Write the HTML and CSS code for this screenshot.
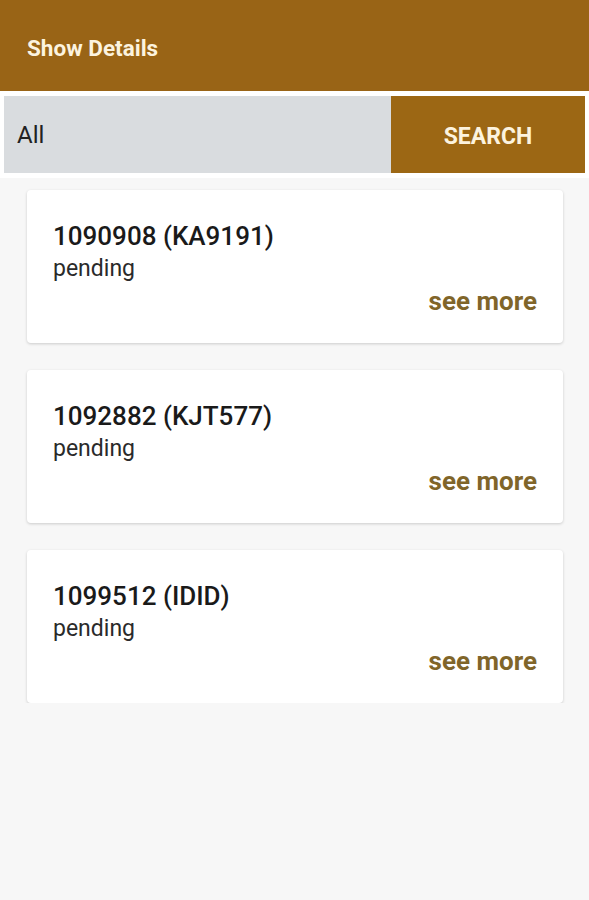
FILE: index.html
```html
<!DOCTYPE html>
<html lang="en">

<head>
    <meta charset="UTF-8">
    <meta name="viewport" content="width=device-width, initial-scale=1.0">
    <title>Show Details</title>
    <link rel="stylesheet" href="styles.css">
</head>

<body>
    <!-- Header -->
    <header class="app-bar">
        <h1 class="app-title">Show Details</h1>
    </header>

    <!-- Search -->
    <div class="search-bar">
        <div class="search-input">All</div>
        <button class="btn-search">SEARCH</button>
    </div>

    <!-- Results -->
    <main class="results">
        <div class="card">
            <div class="card-title">1090908 (KA9191)</div>
            <div class="card-status">pending</div>
            <div class="card-actions"><a class="see-more">see more</a></div>
        </div>
        <div class="card">
            <div class="card-title">1092882 (KJT577)</div>
            <div class="card-status">pending</div>
            <div class="card-actions"><a class="see-more">see more</a></div>
        </div>
        <div class="card">
            <div class="card-title">1099512 (IDID)</div>
            <div class="card-status">pending</div>
            <div class="card-actions"><a class="see-more">see more</a></div>
        </div>
    </main>
</body>

</html>
```

FILE: styles.css
```css
/* Base */
body {
    font-family: Roboto, 'Noto Sans', Arial, sans-serif;
    margin: 0;
    background-color: #f7f7f7;
    color: #1f1f1f;
}

/* App bar */
.app-bar {
    height: 91px;
    box-sizing: border-box;
    display: flex;
    align-items: center;
    padding: 4px 27px 0 27px;
    background-color: #996416;
}

.app-title {
    margin: 0;
    font-size: 22.5px;
    font-weight: 700;
    color: #fcf3df;
}

/* Search bar */
.search-bar {
    display: flex;
    padding: 5px 4px;
    background-color: #ffffff;
}

.search-input {
    flex: 1;
    height: 77px;
    display: flex;
    align-items: center;
    padding: 0 13px;
    background-color: #d9dcdf;
    font-size: 24px;
    color: #222;
}

.btn-search {
    width: 194px;
    padding: 4px 0 0 0;
    border: none;
    background-color: #9c6714;
    color: #fcf3df;
    font-family: inherit;
    font-size: 23px;
    font-weight: 700;
    cursor: pointer;
}

/* Results list */
.results {
    display: flex;
    flex-direction: column;
    gap: 27px;
    padding: 12px 26px 0 27px;
}

.card {
    height: 153px;
    box-sizing: border-box;
    padding: 31px 26px 0 26px;
    background-color: #ffffff;
    border-radius: 4px;
    box-shadow: 0 1px 3px rgba(0, 0, 0, 0.18);
}

.card-title {
    font-size: 26px;
    font-weight: 500;
    line-height: 30px;
    color: #1a1a1a;
}

.card-status {
    font-size: 23px;
    line-height: 36px;
    color: #2a2a2a;
}

.card-actions {
    display: flex;
    justify-content: flex-end;
}

.see-more {
    font-size: 26px;
    line-height: 28px;
    font-weight: 700;
    color: #80652a;
    cursor: pointer;
}
```
